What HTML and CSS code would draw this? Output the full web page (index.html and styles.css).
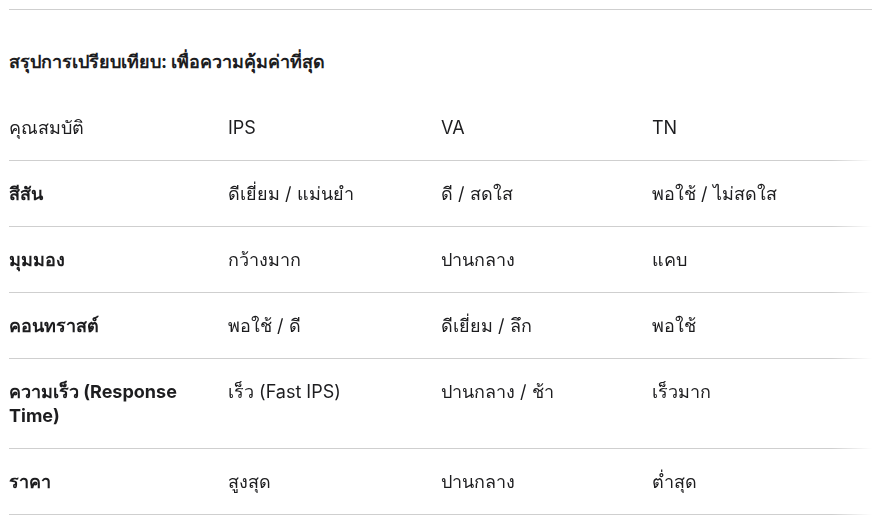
FILE: index.html
```html
<!DOCTYPE html>
<html lang="th">
<head>
<meta charset="utf-8">
<title>สรุปการเปรียบเทียบ</title>
<link rel="stylesheet" href="styles.css">
</head>
<body>
<div class="page">
  <hr class="rule">
  <h2 class="title">สรุปการเปรียบเทียบ: เพื่อความคุ้มค่าที่สุด</h2>
  <div class="table-wrap">
    <table class="compare">
      <colgroup>
        <col class="c1"><col class="c2"><col class="c3"><col class="c4">
      </colgroup>
      <thead>
        <tr><th>คุณสมบัติ</th><th>IPS</th><th>VA</th><th>TN</th></tr>
      </thead>
      <tbody>
        <tr><td class="label">สีสัน</td><td>ดีเยี่ยม / แม่นยำ</td><td>ดี / สดใส</td><td>พอใช้ / ไม่สดใส</td></tr>
        <tr><td class="label">มุมมอง</td><td>กว้างมาก</td><td>ปานกลาง</td><td>แคบ</td></tr>
        <tr><td class="label">คอนทราสต์</td><td>พอใช้ / ดี</td><td>ดีเยี่ยม / ลึก</td><td>พอใช้</td></tr>
        <tr><td class="label">ความเร็ว (Response Time)</td><td>เร็ว (Fast IPS)</td><td>ปานกลาง / ช้า</td><td>เร็วมาก</td></tr>
        <tr><td class="label">ราคา</td><td>สูงสุด</td><td>ปานกลาง</td><td>ต่ำสุด</td></tr>
      </tbody>
    </table>
  </div>
</div>
</body>
</html>
```

FILE: styles.css
```css
html, body {
  margin: 0;
  padding: 0;
  background: #ffffff;
}

body {
  font-family: Inter, "Noto Sans", "Liberation Sans", sans-serif;
  color: #1d1d1f;
  font-size: 18px;
  line-height: 24px;
}

.page {
  padding: 9px 0 0 9px;
}

.rule {
  border: 0;
  border-top: 1px solid #cfcfcf;
  margin: 0;
  height: 0;
}

.title {
  font-size: 18px;
  line-height: 24px;
  font-weight: 700;
  margin: 40px 0 21px 0;
}

.table-wrap {
  -webkit-mask-image: linear-gradient(to right, #000 calc(100% - 40px), transparent);
  mask-image: linear-gradient(to right, #000 calc(100% - 40px), transparent);
}

.compare {
  width: 100%;
  border-collapse: collapse;
  table-layout: fixed;
}

.c1 { width: 219px; }
.c2 { width: 213px; }
.c3 { width: 211px; }

.compare th,
.compare td {
  text-align: left;
  vertical-align: top;
  padding: 21px 16px 20px 0;
  border-bottom: 1px solid #cfcfcf;
  font-weight: 400;
}

.compare td.label {
  font-weight: 700;
}
```
